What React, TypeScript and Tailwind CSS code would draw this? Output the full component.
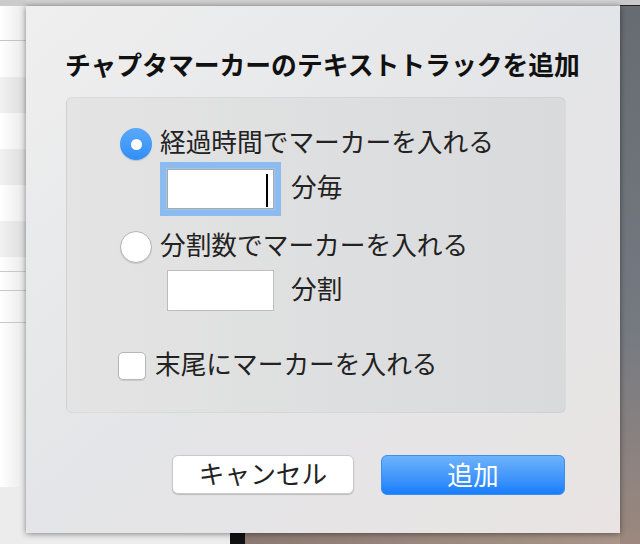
import React from 'react';

const font = { fontFamily: '"Noto Sans CJK JP", "Noto Sans", sans-serif' };

// Noto CJK sits its glyphs a touch low; a short line box plus bottom padding lifts them.
const txt = 'whitespace-nowrap leading-[26px] pb-[6px]';

function Radio({ checked }: { checked: boolean }) {
  if (checked) {
    return (
      <span className="flex h-[32px] w-[32px] shrink-0 items-center justify-center rounded-full bg-gradient-to-b from-[#5aa8fb] to-[#2f8ff7] shadow-[0_1px_1px_rgba(0,0,0,0.15)]">
        <span className="h-[11px] w-[11px] rounded-full bg-white" />
      </span>
    );
  }
  return (
    <span className="h-[32px] w-[32px] shrink-0 rounded-full border border-[#b4b4b4] bg-white shadow-[0_1px_1px_rgba(0,0,0,0.12)]" />
  );
}

function TableStrip() {
  return (
    <div className="flex w-[26px] shrink-0 flex-col bg-gradient-to-r from-white to-[#e9e9e9]">
      <div className="h-[35px] shrink-0 border-b border-[#c4c4c4]" />
      <div className="h-[36px] shrink-0" />
      <div className="h-[36px] shrink-0 bg-black/[0.05]" />
      <div className="h-[36px] shrink-0" />
      <div className="h-[36px] shrink-0 bg-black/[0.05]" />
      <div className="h-[36px] shrink-0" />
      <div className="h-[36px] shrink-0 bg-black/[0.05]" />
      <div className="h-[15px] shrink-0 border-b border-[#c8c8c8]" />
      <div className="h-[19px] shrink-0 border-b border-[#c8c8c8]" />
      <div className="h-[32px] shrink-0 border-b border-[#c8c8c8]" />
      <div className="h-[164px] shrink-0" />
      <div className="flex-1 bg-[#ececec]" />
    </div>
  );
}

export default function App() {
  return (
    <div className="flex h-[544px] w-[640px] flex-col overflow-hidden bg-[#ececec]" style={font}>
      <div className="flex h-[6px] shrink-0">
        <div className="w-[26px] bg-[#cbcbcb]" />
        <div className="w-[594px] bg-gradient-to-b from-[#d2d2d2] to-[#c4c4c4]" />
        <div className="w-[20px] border-b border-[#222] bg-[#c9c9c9]" />
      </div>

      <div className="flex flex-1">
        <TableStrip />

        <div className="flex w-[594px] shrink-0 flex-col">
          <div className="relative z-10 flex h-[527px] shrink-0 flex-col bg-gradient-to-br from-[#efefef] via-[#e4e5e8] to-[#e9e4e3] pl-[39px] pr-[54px] pt-[43px] shadow-[0_1px_6px_rgba(0,0,0,0.45)]">
            <h1 className="whitespace-nowrap pb-[3px] text-[25.8px] font-bold leading-[30px] text-[#111]">
              チャプタマーカーのテキストトラックを追加
            </h1>

            <div className="ml-px mt-[15px] flex h-[316px] w-[500px] flex-col rounded-[6px] border border-black/[0.04] bg-gradient-to-r from-[#e4e4e4] to-[#d9dadc] pl-[53px] pt-[30px] text-[25.7px] text-[#222]">
              <label className="flex items-center gap-[8px]">
                <Radio checked />
                <span className={txt}>経過時間でマーカーを入れる</span>
              </label>

              <div className="mt-[9px] flex items-center pl-[47px]">
                <div className="relative h-[40px] w-[107px] border border-[#a9a9a9] bg-white shadow-[0_0_0_1px_#9dc3ee,0_0_0_7px_#8cbbef]">
                  <span className="absolute right-[5px] top-[4px] h-[33px] w-[2px] bg-black" />
                </div>
                <span className={`ml-[17px] ${txt}`}>分毎</span>
              </div>

              <label className="mt-[22px] flex items-center gap-[8px]">
                <Radio checked={false} />
                <span className={txt}>分割数でマーカーを入れる</span>
              </label>

              <div className="mt-[7px] flex items-center pl-[47px]">
                <div className="h-[41px] w-[107px] border border-[#bdbdbd] bg-white" />
                <span className={`ml-[17px] ${txt}`}>分割</span>
              </div>

              <label className="mt-[39px] flex items-center gap-[9px]">
                <span className="-ml-[2px] h-[28px] w-[28px] shrink-0 rounded-[5px] border border-[#b6b6b6] bg-white shadow-[0_1px_1px_rgba(0,0,0,0.1)]" />
                <span className={txt}>末尾にマーカーを入れる</span>
              </label>
            </div>

            <div className="mt-[42px] flex gap-[27px] pl-[107px]">
              <button className="flex h-[39px] w-[182px] items-center justify-center rounded-[6px] border border-[#c9c9c9] bg-white pb-[3px] text-[25.7px] leading-none text-[#222] shadow-[0_1px_1px_rgba(0,0,0,0.18)]">
                キャンセル
              </button>
              <button className="flex h-[40px] w-[184px] items-center justify-center rounded-[6px] border border-[#3a8ff5] bg-gradient-to-b from-[#6cb3fa] to-[#167dfb] pb-[3px] text-[25.7px] leading-none text-white">
                追加
              </button>
            </div>
          </div>

          <div className="flex flex-1">
            <div className="w-[204px] bg-[#ededed]" />
            <div className="w-[15px] bg-[#111]" />
            <div className="flex-1 bg-gradient-to-r from-[#8c7a72] to-[#a99589]" />
          </div>
        </div>

        <div className="w-[20px] shrink-0 bg-gradient-to-b from-[#676b72] via-[#757a82] via-60% to-[#9c887e]" />
      </div>
    </div>
  );
}
